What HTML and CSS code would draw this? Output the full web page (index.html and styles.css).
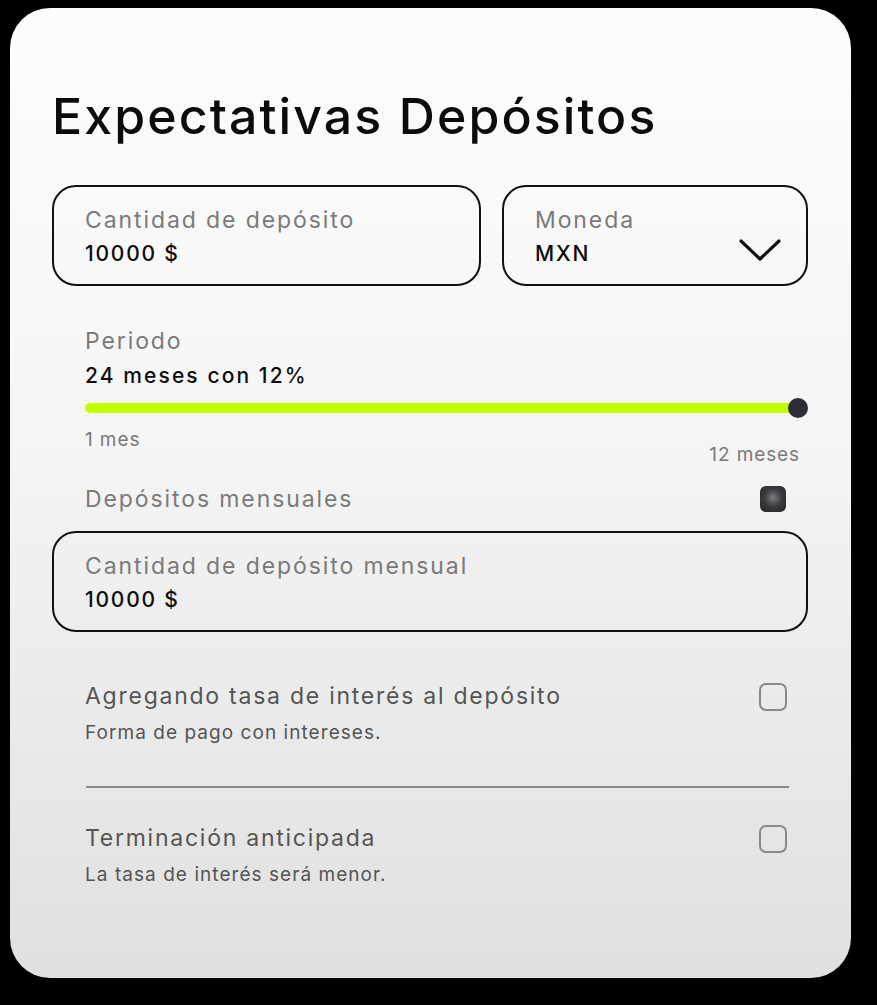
FILE: index.html
```html
<!DOCTYPE html>
<html lang="es">
<head>
<meta charset="utf-8">
<title>Expectativas Depósitos</title>
<link rel="stylesheet" href="styles.css">
</head>
<body>
<main class="card">
  <h1 class="title">Expectativas Depósitos</h1>

  <div class="fields-row">
    <div class="field field-amount">
      <span class="field-label">Cantidad de depósito</span>
      <span class="field-value">10000 $</span>
    </div>
    <div class="field field-currency">
      <div class="field-text">
        <span class="field-label">Moneda</span>
        <span class="field-value">MXN</span>
      </div>
      <svg class="chevron" width="44" height="26" viewBox="0 0 44 26" aria-hidden="true">
        <path d="M3 4 L22 22 L41 4" fill="none" stroke="#111" stroke-width="3.2" stroke-linecap="round" stroke-linejoin="round"/>
      </svg>
    </div>
  </div>

  <section class="period">
    <span class="field-label">Periodo</span>
    <span class="period-value">24 meses con 12%</span>
    <div class="slider">
      <div class="slider-track"></div>
      <div class="slider-thumb"></div>
    </div>
    <div class="slider-scale">
      <span class="scale-min">1 mes</span>
      <span class="scale-max">12 meses</span>
    </div>
  </section>

  <div class="toggle-row">
    <span class="field-label">Depósitos mensuales</span>
    <span class="check check-on"></span>
  </div>

  <div class="field field-wide">
    <span class="field-label">Cantidad de depósito mensual</span>
    <span class="field-value">10000 $</span>
  </div>

  <div class="option">
    <div class="option-text">
      <span class="option-title">Agregando tasa de interés al depósito</span>
      <span class="option-sub">Forma de pago con intereses.</span>
    </div>
    <span class="check"></span>
  </div>

  <hr class="divider">

  <div class="option">
    <div class="option-text">
      <span class="option-title">Terminación anticipada</span>
      <span class="option-sub">La tasa de interés será menor.</span>
    </div>
    <span class="check"></span>
  </div>
</main>
</body>
</html>
```

FILE: styles.css
```css
* { box-sizing: border-box; }

html, body {
  margin: 0;
  background: #000;
}

body {
  padding: 8px 26px 27px 10px;
  font-family: "Inter", "Open Sans", sans-serif;
}

.card {
  width: 841px;
  height: 970px;
  border-radius: 40px;
  background: linear-gradient(180deg, #fdfdfd 0%, #f5f5f5 45%, #e0e0e0 100%);
  padding: 78px 43px 0 42px;
  display: flex;
  flex-direction: column;
}

.title {
  margin: 0;
  font-size: 50px;
  line-height: 60px;
  font-weight: 500;
  color: #0b0b0b;
  letter-spacing: 2.1px;
}

.fields-row {
  margin-top: 39px;
  display: flex;
  gap: 21px;
}

.field {
  border: 2px solid #111;
  border-radius: 24px;
  height: 101px;
  padding: 17px 31px 0 31px;
  display: flex;
  flex-direction: column;
}

.field-amount { width: 429px; }

.field-currency {
  width: 306px;
  flex-direction: row;
  justify-content: space-between;
  align-items: flex-start;
  padding-right: 24px;
}

.field-text {
  display: flex;
  flex-direction: column;
}

.chevron {
  margin-top: 33px;
}

.field-label {
  font-size: 23px;
  line-height: 32px;
  color: #7a7a7a;
  letter-spacing: 1.9px;
}

.field-value {
  margin-top: 3px;
  font-size: 21px;
  line-height: 30px;
  font-weight: 500;
  color: #0d0d0d;
  letter-spacing: 1.8px;
}

.period {
  margin-top: 39px;
  padding: 0 0 0 33px;
  display: flex;
  flex-direction: column;
}

.period-value {
  margin-top: 4px;
  font-size: 21px;
  line-height: 30px;
  font-weight: 500;
  color: #0d0d0d;
  letter-spacing: 2.1px;
}

.slider {
  margin-top: 7px;
  height: 20px;
  position: relative;
  width: 723px;
}

.slider-track {
  position: absolute;
  left: 0;
  right: 10px;
  top: 5px;
  height: 10px;
  border-radius: 5px;
  background: #c3ff00;
}

.slider-thumb {
  position: absolute;
  right: 0;
  top: 0;
  width: 20px;
  height: 20px;
  border-radius: 50%;
  background: #2b2e34;
}

.slider-scale {
  margin-top: 10px;
  display: flex;
  justify-content: space-between;
  align-items: flex-start;
  width: 714px;
  font-size: 19px;
  line-height: 24px;
  color: #7a7a7a;
  letter-spacing: 0.9px;
}

.scale-max { margin-top: 15px; margin-right: -1px; }

.toggle-row {
  margin-top: 16px;
  padding: 0 22px 0 33px;
  display: flex;
  justify-content: space-between;
  align-items: center;
  height: 32px;
}

.check {
  width: 28px;
  height: 28px;
  border: 2.5px solid #8a8a8a;
  border-radius: 7px;
  flex: none;
}

.check-on {
  width: 26px;
  height: 26px;
  border: none;
  border-radius: 6px;
  background: radial-gradient(circle at 50% 45%, #7a7c80 0%, #3a3c40 45%, #1f2124 100%);
}

.field-wide {
  margin-top: 16px;
  width: 756px;
}

.option {
  margin-top: 48px;
  padding: 0 21px 0 33px;
  display: flex;
  justify-content: space-between;
  align-items: flex-start;
}

.option .check { margin-top: 3px; }

.option-text {
  display: flex;
  flex-direction: column;
}

.option-title {
  font-size: 23px;
  line-height: 32px;
  color: #555;
  letter-spacing: 1.75px;
}

.option-sub {
  margin-top: 9px;
  font-size: 19px;
  line-height: 24px;
  color: #555;
  letter-spacing: 1.05px;
}

.divider {
  margin: 41px 19px 0 34px;
  border: none;
  height: 2px;
  background: #8a8a8a;
}

.divider + .option { margin-top: 34px; }
```
